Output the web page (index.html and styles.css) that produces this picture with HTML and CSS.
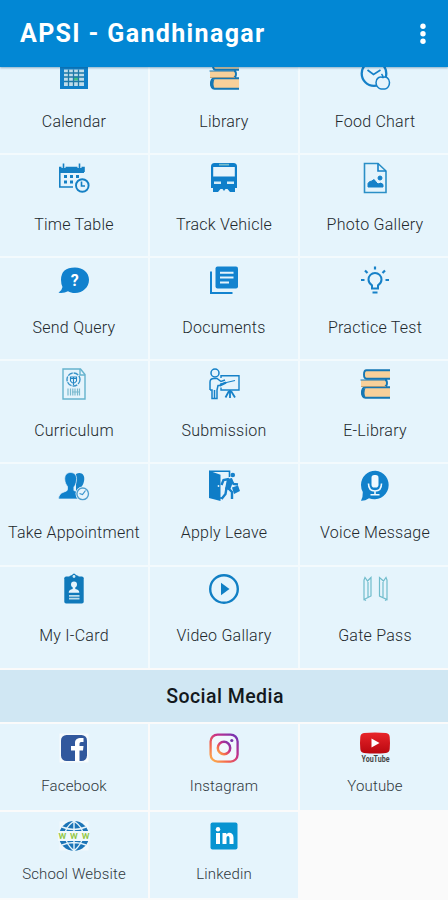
FILE: index.html
```html
<!DOCTYPE html>
<html lang="en">
<head>
<meta charset="utf-8">
<title>APSI - Gandhinagar</title>
<link rel="stylesheet" href="styles.css">
</head>
<body>
<svg class="defs" width="0" height="0">
  <defs>
    <linearGradient id="insta" x1="0" y1="1" x2="1" y2="0">
      <stop offset="0" stop-color="#fdb94e"/><stop offset=".3" stop-color="#f4684c"/><stop offset=".6" stop-color="#c62f88"/><stop offset="1" stop-color="#6a35b8"/>
    </linearGradient>
    <linearGradient id="tube" x1="0" y1="0" x2="0" y2="1">
      <stop offset="0" stop-color="#e8252a"/><stop offset="1" stop-color="#b9070f"/>
    </linearGradient>
    <symbol id="books" viewBox="0 0 32 32">
      <path d="M31 2.500H7q-2.500 0-2.500 4.300T7 11h24z" fill="#f8d09a"/>
      <path d="M2 12h25v7H2z" fill="#f8d09a"/>
      <path d="M31 20H6q-3 0-3 5t3 5h25z" fill="#f8d09a"/>
      <path d="M31 2.300H7.500Q5 2.300 5 6.500T7.500 10.800H31M26 12q2 0 2 3t-2 3.500M31 19.300H6.500Q3 19.300 3 24.500T6.500 29.800H31" fill="none" stroke="#1577b4" stroke-width="1.900"/>
      <path d="M1.500 12H26" stroke="#1577b4" stroke-width="1"/>
      <path d="M6.500 20Q2 21 2 24.500T6.500 29.500Q4.500 24.500 6.500 20z" fill="#1577b4"/>
      <path d="M2 18.500h25" stroke="#b79c72" stroke-width=".8"/>
    </symbol>
  </defs>
</svg>

<header class="appbar">
  <h1 class="title">APSI - Gandhinagar</h1>
  <svg class="more" viewBox="0 0 8 24"><circle cx="4" cy="4.300" r="2.700"/><circle cx="4" cy="11.800" r="2.700"/><circle cx="4" cy="19.300" r="2.700"/></svg>
</header>

<main class="scroller">
  <section class="grid menu">
    <a class="cell">
      <svg class="icon" viewBox="0 0 32 32"><path d="M2 2h28v28H2z" fill="#1080c9"/><path d="M6 10.500h20V27H6z" fill="#bfdcea"/><path d="M16 17.500h5v4h-5z" fill="#3fc083"/><path d="M6 14h20M6 18h20M6 22.500h20M10.500 10.500V27M15.500 10.500V27M20.500 10.500V27" stroke="#1d78a8" stroke-width="1.300"/></svg>
      <span class="label">Calendar</span></a>
    <a class="cell"><svg class="icon"><use href="#books"/></svg><span class="label">Library</span></a>
    <a class="cell">
      <svg class="icon line" viewBox="0 0 32 32"><circle cx="15" cy="14.500" r="12.300" stroke-width="2.300"/><path d="M8.500 11l6 4.500 7-4.500" stroke-width="1.700"/><path d="M24 18.500c-3-1.500-7 .5-7 5 0 3 2.500 6.500 5 6.500h4c2.500 0 4.500-3.500 4.500-6.500 0-4-3.500-6.500-6.500-5zm0 0q0-2-1.500-3.500" fill="#e6f4fc" stroke-width="1.500"/></svg>
      <span class="label">Food Chart</span></a>

    <a class="cell">
      <svg class="icon" viewBox="0 0 32 32"><path d="M1 5h25v6H1z" fill="#1580c4"/><path d="M26 10V5.500H1.800V25H15" fill="none" stroke="#1580c4" stroke-width="1.600"/><path d="M5.500 2v4M21.500 2v4" stroke="#e6f4fc" stroke-width="4"/><path d="M5.500 1.500v5M21.500 1.500v5" stroke="#1580c4" stroke-width="1.600"/><path d="M6 13h3v3H6zM12 13h3v3h-3zM18 13h3v3h-3zM6 18.500h3v3H6zM12 18.500h3v3h-3z" fill="#1580c4"/><circle cx="24.300" cy="23.500" r="8.300" fill="#e6f4fc"/><circle cx="24.300" cy="23.500" r="6.300" fill="none" stroke="#1580c4" stroke-width="1.900"/><path d="M23.500 19.500V24H27" fill="none" stroke="#1580c4" stroke-width="1.600"/></svg>
      <span class="label">Time Table</span></a>
    <a class="cell">
      <svg class="icon" viewBox="0 0 32 32"><path d="M6.500 1h19Q29 1 29 4.500V26h-2v4h-5l-2.500-3h-2l-1.500 2-1.500-2h-2L10 30H5v-4H3V4.500Q3 1 6.500 1z" fill="#0f7fca"/><path d="M5.200 5h21.600v9.500H5.200z" fill="#e6f4fc"/><path d="M11 1.800h10v1.700H11z" fill="#75bdcb"/><path d="M6 19.500h7v2.600H6zM19 19.500h7v2.600h-7z" fill="#d5edf8"/></svg>
      <span class="label">Track Vehicle</span></a>
    <a class="cell">
      <svg class="icon line" viewBox="0 0 32 32"><path d="M5.500 1.500H19L27 9v21.500H5.500z" stroke-width="1.600" stroke="#2b8fc6"/><path d="M19 1.500V9h8" stroke-width="1.600"/><path d="M9 25v-3.500q1-2.500 4-2.500 2-3 4 1l2 2q3-2 5 .5V25z" fill="#1681c8" stroke-width="1"/><circle cx="21" cy="16" r="2" fill="#1681c8" stroke-width="1"/></svg>
      <span class="label">Photo Gallery</span></a>

    <a class="cell">
      <svg class="icon" viewBox="0 0 32 32"><path d="M17 2.500c8 0 14 5 14 12.300S25 28 17 28c-3 0-5-.6-7-1.800Q6 28.500.5 27.800 4 25.500 4.500 22 3 19 3 14.800 3 2.500 17 2.500z" fill="#1181ce"/><text x="16.800" y="21" class="question">?</text></svg>
      <span class="label">Send Query</span></a>
    <a class="cell">
      <svg class="icon" viewBox="0 0 32 32"><path d="M3 6.500V28h21.500" fill="none" stroke="#1383cf" stroke-width="2"/><rect x="7.500" y="1.500" width="22.500" height="22" rx="2" fill="#1383cf"/><path d="M12 7.700h13.500M12 12.500h13.500M12 17.500h9" stroke="#e6f4fc" stroke-width="2"/></svg>
      <span class="label">Documents</span></a>
    <a class="cell">
      <svg class="icon line" viewBox="0 0 32 32"><path d="M13 23.500v-3.200Q9.500 18 9.500 14.500a6.500 6.500 0 0 1 13 0q0 3.500-3.500 5.800v3.200z" stroke-width="2"/><path d="M13.500 27.500h5M16 1.500v3M2 15h3.500M26.500 15H30M6 5.500l2.500 2.500M26 5.500L23.500 8" stroke-width="2.200"/></svg>
      <span class="label">Practice Test</span></a>

    <a class="cell">
      <svg class="icon curriculum" viewBox="0 0 32 32"><path d="M5 1h17.500l4.500 5.500V31H5z"/><path d="M22 1v6h5"/><circle cx="15.500" cy="11.500" r="6.500" stroke="#3a94c8" stroke-dasharray="5 1"/><path d="M12.500 9h6v4q-3 4.500-6 0zM13 10.500h5M15.500 9v8" stroke="#2286c4" stroke-width="1.100"/><path d="M10 20.500v7M12.500 20.500v7M14.800 20.500v7M17 20.500v7M19.500 20.500v7M21.500 20.500v7M14 24h8" stroke="#79b9ce" stroke-width="1.200"/></svg>
      <span class="label">Curriculum</span></a>
    <a class="cell">
      <svg class="icon line" viewBox="0 0 32 32"><circle cx="7" cy="5" r="4" stroke-width="1.500"/><path d="M2 22v-8q0-3.500 4-3.500h3l4 3 4-1.500M2 22h2v8.500h5V22l1-4.500M6.500 22v8M13 17.500h-3.500" stroke-width="1.500"/><path d="M13 10V7.800h18V22H13v-2.500" stroke-width="1.400"/><path d="M12 16l15-3.500" stroke-width="1.200"/><path d="M12 17.500l6-3" stroke-width="2.200"/><path d="M22 22v8M21 23l-3.500 6.500M23 23l4 6.500" stroke-width="1.800"/></svg>
      <span class="label">Submission</span></a>
    <a class="cell"><svg class="icon"><use href="#books"/></svg><span class="label">E-Library</span></a>

    <a class="cell">
      <svg class="icon" viewBox="0 0 32 32"><path d="M18 4c5-2.500 9 .5 8.200 6-.3 3-1.500 5-2.700 7l1 3 4.500 3v6H18z" fill="#1682c8"/><path d="M12.500 2.500c4 0 6.500 2.500 6 7.500-.2 3-1.200 5.500-2.600 7v3.500Q23 22 24 29H.5q.3-5.500 5.500-7 3.500-1 3.500-2.500v-3C8 14.500 7 12.500 6.800 10c-.5-5 2-7.500 5.700-7.500z" fill="#1181cb" stroke="#e6f4fc" stroke-width=".7"/><circle cx="24.700" cy="23.800" r="7.200" fill="#e6f4fc"/><circle cx="24.700" cy="23.800" r="5.800" fill="none" stroke="#4f9fce" stroke-width="1.400"/><path d="M27.500 20.500l-3 4-3-1" fill="none" stroke="#3994cd" stroke-width="1.200"/></svg>
      <span class="label">Take Appointment</span></a>
    <a class="cell">
      <svg class="icon" viewBox="0 0 32 32"><path d="M1 .8l11.500 4V31L1 28z" fill="#0f7dc7"/><path d="M1 1.200h20.500V7M12 28h3" fill="none" stroke="#0f7dc7" stroke-width="1.600"/><circle cx="24.800" cy="5" r="2.300" fill="#1681cb"/><path d="M22 10l-3.500 9M21 9l-5.500 1-2 5M23 9.500l2.500 4.500 4.500.5M18.500 18l-1 6-4 5M20 18l4 4v7" fill="none" stroke="#1681cb" stroke-width="2.400"/><path d="M19 9l5-1 1 4-3 8-5-1z" fill="#1681cb"/><path d="M24 17.500l6-2 2 5.500-6 3z" fill="#1681cb"/><circle cx="10.500" cy="16" r=".9" fill="#e6f4fc"/></svg>
      <span class="label">Apply Leave</span></a>
    <a class="cell">
      <svg class="icon" viewBox="0 0 32 32"><path d="M16.500.7A14.300 14.300 0 1 1 10 28.200Q6 31 2 30.800 4 27.500 3.800 22 2 19 2 15A14.300 14.300 0 0 1 16.500.7z" fill="#1181cb"/><rect x="12.500" y="5" width="7" height="12.500" rx="2.800" fill="#eff9ff"/><path d="M9.500 13.500q0 7.500 6.500 7.500t6.500-7.500M16 21v4M11.500 24.800h9" fill="none" stroke="#eff9ff" stroke-width="1.600"/></svg>
      <span class="label">Voice Message</span></a>

    <a class="cell">
      <svg class="icon" viewBox="0 0 32 32"><rect x="6.300" y="3.500" width="19.400" height="27" rx="1.800" fill="#1079ba"/><path d="M11.500 3l2.500-1q2-3 4 0l2.500 1v2.500h-9z" fill="#1079ba"/><circle cx="16" cy="3.500" r="1.400" fill="#d4edf8"/><circle cx="16" cy="11.500" r="3" fill="#e6f4fc"/><path d="M14.700 13h2.600v3q4 .5 4 3.800H10.700q0-3.300 4-3.800z" fill="#e6f4fc"/><path d="M11 22.800h10.500M11 25.700h10.500" stroke="#b9dceb" stroke-width="1.800"/></svg>
      <span class="label">My I-Card</span></a>
    <a class="cell">
      <svg class="icon" viewBox="0 0 32 32"><circle cx="16" cy="16" r="13.800" fill="none" stroke="#117fc4" stroke-width="2.400"/><path d="M13 9.700v12.600l8.500-6.300z" fill="#117fc4"/></svg>
      <span class="label">Video Gallary</span></a>
    <a class="cell">
      <svg class="icon gate" viewBox="0 0 32 32"><path d="M5 7v19.500L12 23V4.500L8.500 8 6 4.500zM9 9v15M5 26.500l2 1"/><path d="M28 7v19.500L20.500 23V4.500L24.500 8 27 4.500zM24 9v15M28 26.500l-2 1"/></svg>
      <span class="label">Gate Pass</span></a>
  </section>

  <h2 class="section-title">Social Media</h2>

  <section class="grid social">
    <a class="cell">
      <svg class="icon" viewBox="0 0 32 32"><path d="M1.500 1.500h29v29h-29z" fill="#f6fbfd"/><rect x="3" y="3" width="26" height="26" rx="5.500" fill="#31589d"/><path d="M17 29V18.500h-4V14h4v-3c0-4 2.400-5.500 8.500-5v4c-3-.2-4 .1-4 2v2h4l-.5 4.500h-3.500V29z" fill="#fff"/></svg>
      <span class="label">Facebook</span></a>
    <a class="cell">
      <svg class="icon" viewBox="0 0 32 32"><rect x="2.600" y="2.600" width="27" height="27" rx="7" fill="#f0f8fd" stroke="url(#insta)" stroke-width="2.300"/><circle cx="16" cy="16" r="6.200" fill="none" stroke="url(#insta)" stroke-width="2.500"/><circle cx="23.800" cy="8.500" r="1.600" fill="#7937ac"/></svg>
      <span class="label">Instagram</span></a>
    <a class="cell">
      <svg class="icon" viewBox="0 0 32 32"><path d="M5 1q11-1 22 0 3.500.5 3.700 4 .6 6 0 12-.2 3.500-3.700 4-11 1-22 0-3.500-.5-3.700-4-.6-6 0-12Q1.500 1.500 5 1z" fill="url(#tube)"/><path d="M12.500 6.500v9l8-4.500z" fill="#fff"/><text x="2.500" y="30.300" class="tube-text" textLength="28" lengthAdjust="spacingAndGlyphs">YouTube</text></svg>
      <span class="label">Youtube</span></a>
    <a class="cell">
      <svg class="icon" viewBox="0 0 32 32"><path d="M1.500 1.500h29v29h-29z" fill="#f1f9fc"/><circle cx="16" cy="16" r="15" fill="#1c75b7"/><path d="M16 1v30M16 1Q6 8 7 16t9 15M16 1q10 7 9 15t-9 15M4 7q12 5 24 0M4 25q12-5 24 0" fill="none" stroke="#e7f5fb" stroke-width="1.400"/><path d="M0 11h32v10H0z" fill="#f1f9fc"/><text x="0.500" y="19" class="www-text" textLength="31" lengthAdjust="spacing">www</text></svg>
      <span class="label">School Website</span></a>
    <a class="cell">
      <svg class="icon" viewBox="0 0 32 32"><rect x="2.500" y="2.500" width="27" height="27" rx="2" fill="#0894d1"/><path d="M8 13h4v11H8zM14.500 13h3.800v1.600c2-3 7.200-2.200 7.200 2.900V24h-4v-5.700c0-3-3-3-3 0V24h-4z" fill="#fff"/><circle cx="10" cy="9.300" r="2.200" fill="#fff"/></svg>
      <span class="label">Linkedin</span></a>
  </section>
</main>
</body>
</html>
```
FILE: styles.css
```css
* { box-sizing: border-box; }

body {
  margin: 0;
  height: 900px;
  display: flex;
  flex-direction: column;
  overflow: hidden;
  background: #fafafa;
  font-family: Roboto, "Liberation Sans", sans-serif;
}

.defs { position: absolute; }

.appbar {
  flex: none;
  height: 67px;
  padding: 1px 21px 0 20px;
  display: flex;
  align-items: center;
  justify-content: space-between;
  background: #0287d4;
  box-shadow: 0 1px 2px rgba(0, 70, 120, .4);
  position: relative;
  z-index: 1;
}

.title {
  margin: 0;
  color: #fff;
  font-size: 25px;
  line-height: 30px;
  font-weight: 700;
  letter-spacing: 1.350px;
}

.more { width: 8px; height: 24px; fill: #fff; }

.scroller { flex: 1; min-height: 0; overflow: hidden; }

.grid {
  display: grid;
  grid-template-columns: 148px 148px 149px;
  gap: 2px;
}

.menu {
  margin-top: -14.500px;
  grid-auto-rows: 100.850px;
  background: #f3fafd;
}

.cell {
  display: flex;
  flex-direction: column;
  align-items: center;
  background: #e5f4fc;
  padding-top: 6.500px;
}

.cell:nth-child(3n) { padding-left: 1px; }

.icon { display: block; width: 32px; height: 32px; flex: none; overflow: visible; }
.line { fill: none; stroke: #1681c8; }
.curriculum { fill: none; stroke: #65b3cd; stroke-width: 1.400; }
.gate { fill: none; stroke: #70bccc; stroke-width: 1.200; }
.question { font: 700 16px Roboto, sans-serif; fill: #fff; text-anchor: middle; }
.tube-text { font: 700 9px Roboto, sans-serif; fill: #444; }
.www-text { font: 500 10.500px Roboto, sans-serif; fill: #8fc63e; }

.label {
  margin-top: 20px;
  font-size: 16px;
  font-weight: 300;
  line-height: 22px;
  letter-spacing: .250px;
  white-space: nowrap;
  color: #22282c;
}

.section-title {
  margin: 2px 0;
  height: 52.500px;
  line-height: 54px;
  padding-left: 2px;
  text-align: center;
  background: #d0e7f3;
  color: #13191d;
  font-size: 19.500px;
  font-weight: 500;
  letter-spacing: .450px;
}

.social { grid-auto-rows: 86px; }
.social .cell { padding-top: 7.500px; }

.social .label {
  margin-top: 12px;
  font-size: 15px;
  line-height: 20px;
  letter-spacing: .150px;
  color: #30383d;
}
```
